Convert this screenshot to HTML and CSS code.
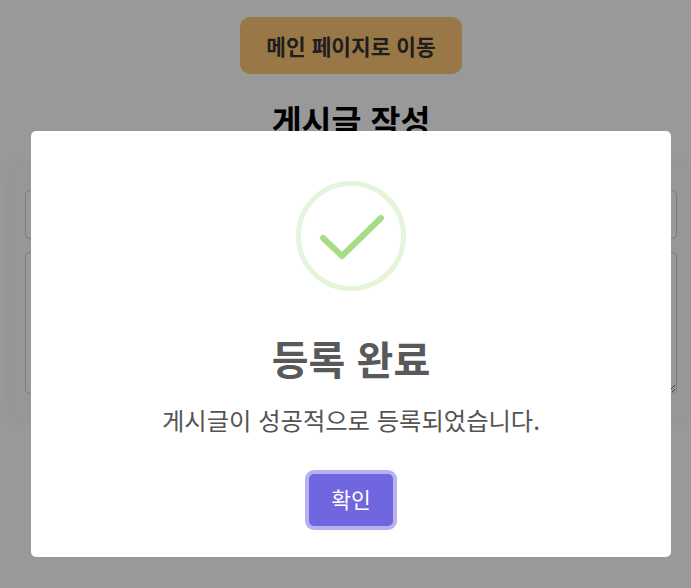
FILE: index.html
```html
<!DOCTYPE html>
<html lang="ko">
<head>
    <meta charset="UTF-8">
    <meta name="viewport" content="width=device-width, initial-scale=1.0">
    <title>게시글 작성</title>
    <link rel="stylesheet" href="styles.css">
</head>
<body>
    <div class="page">
        <button class="main-btn">메인 페이지로 이동</button>
        <h2 class="page-title">게시글 작성</h2>
        <div class="form-card">
            <input type="text" class="title-input">
            <textarea class="content-input"></textarea>
        </div>

        <div class="overlay">
            <div class="modal">
                <svg class="success-icon" width="110" height="110" viewBox="0 0 110 110">
                    <circle cx="55" cy="55" r="52.5" fill="none" stroke="#e5f5dc" stroke-width="5"/>
                    <polyline points="27,57 46,75 85,37" fill="none" stroke="#a5dc86" stroke-width="6" stroke-linecap="round" stroke-linejoin="round"/>
                </svg>
                <h2 class="modal-title">등록 완료</h2>
                <p class="modal-text">게시글이 성공적으로 등록되었습니다.</p>
                <button class="confirm-btn">확인</button>
            </div>
        </div>
    </div>
</body>
</html>
```
FILE: styles.css
```css
html, body {
    margin: 0;
    padding: 0;
    height: 588px;
    overflow: hidden;
}
body {
    font-family: "Noto Sans CJK KR", "Noto Sans", sans-serif;
    background: #fff;
}
.page {
    position: relative;
    width: 702px;
    height: 588px;
    padding-top: 17px;
    box-sizing: border-box;
    display: flex;
    flex-direction: column;
    align-items: center;
}
.main-btn {
    width: 222px;
    height: 57px;
    padding: 0;
    border: none;
    border-radius: 10px;
    background: #ffc777;
    color: #333;
    font-family: inherit;
    font-size: 21.4px;
    font-weight: 700;
}
.page-title {
    margin: 25px 0 0;
    height: 49px;
    font-size: 32.5px;
    line-height: 42px;
    font-weight: 700;
    color: #000;
}
.form-card {
    width: 652px;
    margin-top: 17px;
    padding: 25px 15px;
    display: flex;
    flex-direction: column;
    gap: 13px;
    background: #fcfcfc;
    border-radius: 10px;
    box-shadow: 0 0 15px rgba(0, 0, 0, 0.05);
    box-sizing: content-box;
}
.title-input, .content-input {
    display: block;
    width: 100%;
    margin: 0;
    border: 1px solid #ccc;
    border-radius: 5px;
    box-sizing: border-box;
    background: #fff;
}
.title-input {
    height: 49px;
}
.content-input {
    height: 142px;
}
.overlay {
    position: absolute;
    top: 0;
    left: 0;
    right: 0;
    bottom: 0;
    display: flex;
    justify-content: center;
    align-items: flex-start;
    padding-top: 131px;
    box-sizing: border-box;
    background: rgba(0, 0, 0, 0.4);
}
.modal {
    width: 640px;
    height: 426px;
    padding-top: 50px;
    box-sizing: border-box;
    display: flex;
    flex-direction: column;
    align-items: center;
    background: #fff;
    border-radius: 5px;
}
.modal-title {
    margin: 39px 0 0;
    font-size: 40px;
    line-height: 56px;
    font-weight: 600;
    color: #595959;
}
.modal-text {
    margin: 17px 0 0;
    font-size: 24.3px;
    line-height: 33px;
    color: #545454;
}
.confirm-btn {
    width: 84px;
    height: 52px;
    margin-top: 38px;
    padding: 0 0 3px;
    border: none;
    border-radius: 5px;
    background: #7066e0;
    box-shadow: 0 0 0 4px rgba(112, 102, 224, 0.5);
    color: #fff;
    font-family: inherit;
    font-size: 21.5px;
}
```
